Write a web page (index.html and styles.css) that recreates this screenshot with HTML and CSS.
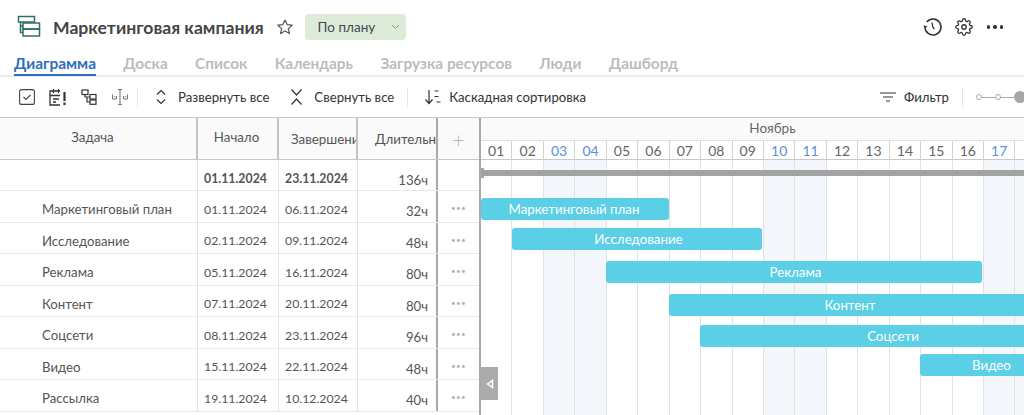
FILE: index.html
```html
<!DOCTYPE html>
<html lang="ru">
<head>
<meta charset="utf-8">
<title>Маркетинговая кампания</title>
<link rel="stylesheet" href="styles.css">
</head>
<body>
<div class="app">
  <header class="top">
    <svg class="logo" width="24" height="24" viewBox="0 0 24 24" fill="none" stroke="#2f6f68" stroke-width="1.5"><rect x="1.5" y="1.5" width="16" height="5.5"/><rect x="6" y="8" width="16.500" height="6"/><rect x="6" y="14" width="16.500" height="7"/><path d="M3.500 7V17.500H6M3.500 11H6"/></svg>
    <h1 class="title">Маркетинговая кампания</h1>
    <svg class="star" width="18" height="18" viewBox="0 0 18 18" fill="none" stroke="#555" stroke-width="1.2" stroke-linejoin="round"><path d="M9 2l2.100 4.600 5 .6-3.700 3.400 1 5L9 13.100l-4.400 2.500 1-5L1.900 7.200l5-.6z"/></svg>
    <div class="status"><span>По плану</span><svg width="9" height="6" viewBox="0 0 9 6" fill="none" stroke="#7f9c82" stroke-width="1"><path d="M1 1l3.500 3.500L8 1"/></svg></div>
    <div class="top-actions">
      <svg width="20" height="20" viewBox="0 0 20 20" fill="none" stroke="#333" stroke-width="1.500"><path d="M3.800 5A8 8 0 1 1 2 10"/><path d="M1 8.500l1.200 1.800 1.800-1.400" stroke-width="1.200"/><path d="M9 5.500l.8 4.500 1.600 2" stroke-width="1.300"/></svg>
      <svg width="18" height="18" viewBox="0 0 24 24" fill="none" stroke="#333" stroke-width="1.700"><path d="M12 15a3 3 0 1 0 0-6 3 3 0 0 0 0 6z"/><path d="M19.400 15a1.650 1.650 0 0 0 .33 1.820l.06.06a2 2 0 0 1 0 2.830 2 2 0 0 1-2.830 0l-.06-.06a1.650 1.650 0 0 0-1.820-.33 1.650 1.650 0 0 0-1 1.510V21a2 2 0 0 1-2 2 2 2 0 0 1-2-2v-.09A1.650 1.650 0 0 0 9 19.400a1.650 1.650 0 0 0-1.820.33l-.06.06a2 2 0 0 1-2.830 0 2 2 0 0 1 0-2.830l.06-.06a1.650 1.650 0 0 0 .33-1.820 1.650 1.650 0 0 0-1.510-1H3a2 2 0 0 1-2-2 2 2 0 0 1 2-2h.09A1.650 1.650 0 0 0 4.600 9a1.650 1.650 0 0 0-.33-1.820l-.06-.06a2 2 0 0 1 0-2.830 2 2 0 0 1 2.830 0l.06.06a1.650 1.650 0 0 0 1.820.33H9a1.650 1.650 0 0 0 1-1.510V3a2 2 0 0 1 2-2 2 2 0 0 1 2 2v.09a1.650 1.650 0 0 0 1 1.510 1.650 1.650 0 0 0 1.820-.33l.06-.06a2 2 0 0 1 2.830 0 2 2 0 0 1 0 2.830l-.06.06a1.650 1.650 0 0 0-.33 1.820V9a1.650 1.650 0 0 0 1.510 1H21a2 2 0 0 1 2 2 2 2 0 0 1-2 2h-.09a1.650 1.650 0 0 0-1.510 1z"/></svg>
      <div class="dots-big"><i></i><i></i><i></i></div>
    </div>
  </header>
  <nav class="tabs">
    <a class="tab active">Диаграмма</a><a class="tab">Доска</a><a class="tab">Список</a><a class="tab">Календарь</a><a class="tab">Загрузка ресурсов</a><a class="tab">Люди</a><a class="tab">Дашборд</a>
  </nav>
  <div class="toolbar">
    <div class="tool-icons">
      <svg width="16" height="16" viewBox="0 0 16 16" fill="none" stroke="#444" stroke-width="1.100"><rect x=".6" y=".6" width="14.800" height="14.800" rx="2"/><path d="M4.500 8l2.500 2.500 4.500-4.500"/></svg>
      <svg width="18" height="19" viewBox="0 0 18 19" fill="none" stroke="#333" stroke-width="1.300"><path d="M11 3H1v14h10M1 7.500h10M4.500 1v4M9.500 1v4M4 11h6M4 14h3"/><path d="M15.500 4v9M15.500 14.500v2.500" stroke-width="2.200"/></svg>
      <svg width="16" height="16" viewBox="0 0 16 16" fill="none" stroke="#333" stroke-width="1.200"><rect x="1" y="1" width="6" height="4.500"/><rect x="9" y="5.500" width="6" height="4.500"/><rect x="9" y="11" width="6" height="4.300"/><path d="M4 5.500v2.500h5M6 8v5h3"/></svg>
      <svg width="18" height="18" viewBox="0 0 18 18" fill="none" stroke="#777" stroke-width="1"><path d="M9 1.500v15M7 1.500h4M7 16.500h4" stroke-width="1.100"/><path d="M1.500 6.500v4.500h4V8M2.800 8.800h1.500M16.500 6.500v4.500h-4V8M13.800 8.800h1.500"/></svg>
    </div>
    <span class="sep"></span>
    <button class="tool tool-expand"><svg width="12" height="18" viewBox="0 0 12 18" fill="none" stroke="#333" stroke-width="1.200"><path d="M2 6.500l4-4 4 4M2 11.500l4 4 4-4"/></svg>Развернуть все</button>
    <button class="tool tool-collapse"><svg width="13" height="18" viewBox="0 0 13 18" fill="none" stroke="#333" stroke-width="1.200"><path d="M1.500 1.500l5 5.500 5-5.500M1.500 16.500l5-5.500 5 5.500"/></svg>Свернуть все</button>
    <span class="sep"></span>
    <button class="tool tool-sort"><svg width="18" height="16" viewBox="0 0 18 16" fill="none" stroke="#333" stroke-width="1.200"><path d="M5 1v13M1.500 10.500L5 14.500l3.500-4M10.500 2h4M10.500 7.500h4M12.500 13h4"/></svg>Каскадная сортировка</button>
    <div class="tool-right">
      <button class="tool tool-filter"><svg width="16" height="10" viewBox="0 0 16 10" fill="none" stroke="#333" stroke-width="1.200"><path d="M0 1h16M3 5h10M6 9h4"/></svg>Фильтр</button>
      <span class="sep"></span>
      <div class="zoom"><i class="knob"></i><b></b><i class="knob"></i><b></b><i class="knob on"></i></div>
    </div>
  </div>
  <main class="board">
    <section class="table">
      <div class="row head">
        <div class="c task">Задача</div>
        <div class="c start">Начало</div>
        <div class="c end low">Завершение</div>
        <div class="c dur low">Длительность</div>
        <div class="c more plus">+</div>
      </div>
      <div class="row total">
        <div class="c task"></div><div class="c start">01.11.2024</div><div class="c end">23.11.2024</div><div class="c dur"><span>136ч</span></div><div class="c more"></div>
      </div>
      <div class="row"><div class="c task">Маркетинговый план</div><div class="c start">01.11.2024</div><div class="c end">06.11.2024</div><div class="c dur"><span>32ч</span></div><div class="c more"><em>•••</em></div></div>
      <div class="row"><div class="c task">Исследование</div><div class="c start">02.11.2024</div><div class="c end">09.11.2024</div><div class="c dur"><span>48ч</span></div><div class="c more"><em>•••</em></div></div>
      <div class="row"><div class="c task">Реклама</div><div class="c start">05.11.2024</div><div class="c end">16.11.2024</div><div class="c dur"><span>80ч</span></div><div class="c more"><em>•••</em></div></div>
      <div class="row"><div class="c task">Контент</div><div class="c start">07.11.2024</div><div class="c end">20.11.2024</div><div class="c dur"><span>80ч</span></div><div class="c more"><em>•••</em></div></div>
      <div class="row"><div class="c task">Соцсети</div><div class="c start">08.11.2024</div><div class="c end">23.11.2024</div><div class="c dur"><span>96ч</span></div><div class="c more"><em>•••</em></div></div>
      <div class="row"><div class="c task">Видео</div><div class="c start">15.11.2024</div><div class="c end">22.11.2024</div><div class="c dur"><span>48ч</span></div><div class="c more"><em>•••</em></div></div>
      <div class="row"><div class="c task">Рассылка</div><div class="c start">19.11.2024</div><div class="c end">10.12.2024</div><div class="c dur"><span>40ч</span></div><div class="c more"><em>•••</em></div></div>
    </section>
    <section class="gantt">
      <div class="month">Ноябрь</div>
      <div class="days">
        <span>01</span><span>02</span><span class="we">03</span><span class="we">04</span><span>05</span><span>06</span><span>07</span><span>08</span><span>09</span><span class="we">10</span><span class="we">11</span><span>12</span><span>13</span><span>14</span><span>15</span><span>16</span><span class="we">17</span><span></span>
      </div>
      <div class="grid">
        <i></i><i></i><i class="we"></i><i class="we"></i><i></i><i></i><i></i><i></i><i></i><i class="we"></i><i class="we"></i><i></i><i></i><i></i><i></i><i></i><i class="we"></i><i class="we"></i>
      </div>
      <div class="summary"></div>
      <div class="bar bar-left" style="left:0;top:80px;width:188px">Маркетинговый план</div>
      <div class="bar bar-right" style="left:31px;top:110px;width:250px">Исследование</div>
      <div class="bar bar-right" style="left:125px;top:143px;width:376px">Реклама</div>
      <div class="bar" style="left:188px;top:176px;width:362px">Контент</div>
      <div class="bar" style="left:219px;top:207px;width:386px">Соцсети</div>
      <div class="bar" style="left:439px;top:236px;width:143px">Видео</div>
      <button class="collapse"><svg width="8" height="10" viewBox="0 0 8 10" fill="none" stroke="#fff" stroke-width="1.500"><path d="M6.500 1.500v7L1.500 5z"/></svg></button>
    </section>
  </main>
</div>
</body>
</html>
```
FILE: styles.css
```css
* { box-sizing: border-box; }
html, body { margin: 0; padding: 0; background: #fff; }
body { font-family: Lato, "Noto Sans", sans-serif; color: #444; }
.app { width: 1024px; height: 415px; overflow: hidden; display: flex; flex-direction: column; }

.top { height: 50px; display: flex; align-items: center; padding: 4px 21px 0 17px; flex: none; }
.logo { flex: none; }
.title { margin: 0 0 0 12px; font-size: 17.600px; font-weight: 700; color: #444; white-space: nowrap; }
.star { margin-left: 12px; flex: none; }
.status { margin-left: 11px; width: 101px; height: 26px; background: #dcecd8; border-radius: 4px; display: flex; align-items: center; justify-content: space-between; padding: 0 6px 0 13px; font-size: 13.500px; color: #445; }
.top-actions { margin-left: auto; display: flex; align-items: center; gap: 12px; }
.dots-big { display: flex; gap: 3px; margin-left: 2px; }
.dots-big i { width: 3.500px; height: 3.500px; border-radius: 50%; background: #333; }

.tabs { height: 27px; flex: none; display: flex; gap: 27.300px; padding-left: 14px; border-bottom: 2px solid #ececec; }
.tab { font-size: 15.400px; font-weight: 700; color: #bcbcbc; line-height: 26px; height: 25px; white-space: nowrap; }
.tab.active { color: #2e6dbc; border-bottom: 2px solid #2e6dbc; height: 26px; }

.toolbar { height: 41px; flex: none; display: flex; align-items: center; padding-left: 19px; border-bottom: 1px solid #c8c8c8; font-size: 13.200px; }
.tool-icons { display: flex; align-items: center; gap: 14px; }
.sep { width: 1px; height: 19px; background: #e6e6e6; margin: 0 11px 0 8px; flex: none; }
.tool { border: 0; background: none; font: inherit; font-size: 13.200px; color: #333; display: flex; align-items: center; gap: 11px; padding: 0; white-space: nowrap; }
.tool-expand { margin: 0 8px 0 6px; }
.tool-collapse { margin: 0 5px 0 13px; }
.tool-sort { margin-left: 5px; gap: 7px; }
.tool-right { margin-left: auto; display: flex; align-items: center; margin-right: -8px; }
.tool-right .sep { margin: 0 13px; }
.tool-filter { gap: 8px; }
.zoom { display: flex; align-items: center; width: 56px; flex: none; }
.zoom b { width: 13px; height: 1px; background: #aaa; }
.knob { width: 6px; height: 6px; border: 1px solid #aaa; border-radius: 50%; flex: none; }
.knob.on { width: 12px; height: 12px; background: #a6a6a6; border: 0; }

.board { flex: 1; display: flex; min-height: 0; }
.table { width: 481px; flex: none; border-right: 2px solid #aaa; }
.row { display: flex; height: 31.500px; border-bottom: 1.500px solid #e8e8e8; font-size: 13.200px; color: #555; }
.row .c { display: flex; align-items: center; white-space: nowrap; overflow: hidden; border-right: 1px solid #e2e2e2; flex: none; padding-top: 6px; }
.row .task { width: 198px; padding-left: 42px; }
.row .start { width: 81px; padding-left: 6px; font-size: 12.300px; }
.row .end { width: 79px; padding-left: 6px; font-size: 12.300px; }
.row .dur { width: 80px; justify-content: flex-end; padding-right: 8px; border-right: 2px solid #a8a8a8; }
.row .dur span { position: relative; top: 2px; font-weight: 400; }
.row .more { width: 41px; justify-content: center; border-right: 0; }
.row em { font-style: normal; font-size: 8px; letter-spacing: .4px; color: #b4b4b4; position: relative; top: -1px; }
.row.total { font-weight: 700; height: 31px; }
.row.head { height: 42px; background: #fafafa; border-bottom: 1.500px solid #c8c8c8; font-size: 13.300px; }
.row.head .c { border-right: 2px solid #c4c4c4; }
.row.head .task { justify-content: center; padding: 0 11px 4px 0; }
.row.head .start { justify-content: center; padding: 0 2px 4px 0; font-size: 13.300px; }
.row.head .end { padding: 0 0 0 12px; font-size: 13.300px; }
.row.head .dur { justify-content: flex-start; padding: 0 0 0 17px; border-right: 2px solid #aaa; }
.row.head .plus { font-size: 22px; font-weight: 300; color: #b4b4b4; padding-top: 2px; border-right: 0; }

.gantt { position: relative; flex: 1; min-width: 0; overflow: hidden; }
.month { height: 22px; background: #fafafa; text-align: center; font-size: 13.500px; line-height: 21px; color: #666; padding-left: 40px; }
.days { height: 20px; display: grid; grid-template-columns: repeat(18, 31.450px); border-top: 1px solid #e0e0e0; border-bottom: 1.500px solid #c8c8c8; background: #fff; }
.days span { border-right: 1.500px solid #d2d2d2; font-size: 14px; text-align: center; line-height: 19px; color: #666; }
.days .we { color: #5b90d6; }
.grid { position: absolute; top: 42px; left: 0; bottom: 0; display: grid; grid-template-columns: repeat(18, 31.450px); }
.grid i { border-right: 1.500px solid #e2e2e2; }
.grid .we { background: #f3f6fb; }
.summary { position: absolute; left: 0; top: 52px; width: 100%; height: 6px; background: #a3a3a3; }
.summary::before { content: ""; position: absolute; left: 0; top: -2px; width: 3px; height: 10px; background: #a3a3a3; }
.bar { position: absolute; height: 22px; background: #5bcfe6; border-radius: 3px; color: #fff; font-size: 13.300px; line-height: 22px; text-align: center; white-space: nowrap; }
.bar-left { padding-right: 2px; }
.bar-right { padding-left: 3px; }
.collapse { position: absolute; left: 0; top: 249px; width: 17px; height: 33px; border: 0; padding: 0; background: #ababab; display: flex; align-items: center; justify-content: center; }
```
